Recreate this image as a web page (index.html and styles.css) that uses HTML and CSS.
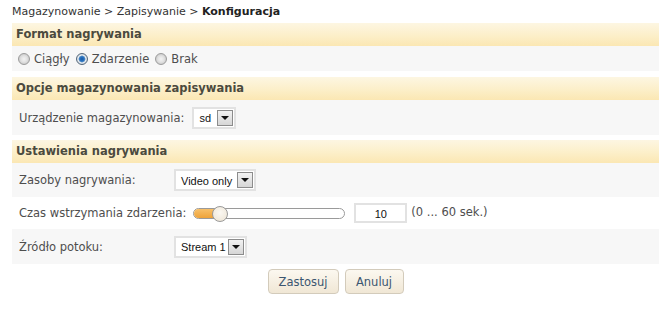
FILE: index.html
```html
<!DOCTYPE html>
<html lang="pl">
<head>
<meta charset="utf-8">
<title>Konfiguracja</title>
<link rel="stylesheet" href="styles.css">
</head>
<body>
<div class="page">
  <div class="crumb">Magazynowanie &gt; Zapisywanie &gt; <b>Konfiguracja</b></div>

  <section class="panel">
    <h2 class="panel-head">Format nagrywania</h2>
    <div class="row row-gray row-radios">
      <label class="radio"><span class="radio-dot"></span>Ciągły</label>
      <label class="radio"><span class="radio-dot checked"></span>Zdarzenie</label>
      <label class="radio"><span class="radio-dot"></span>Brak</label>
    </div>
  </section>

  <section class="panel">
    <h2 class="panel-head">Opcje magazynowania zapisywania</h2>
    <div class="row row-gray row-tall">
      <span class="label">Urządzenie magazynowania:</span>
      <span class="select sel-sd"><span class="sel-text">sd</span><span class="sel-btn"><span class="tri"></span></span></span>
    </div>
  </section>

  <section class="panel">
    <h2 class="panel-head">Ustawienia nagrywania</h2>
    <div class="row row-gray row-r1">
      <span class="label label-col">Zasoby nagrywania:</span>
      <span class="select sel-video"><span class="sel-text">Video only</span><span class="sel-btn"><span class="tri"></span></span></span>
    </div>
    <div class="row row-white row-r2">
      <span class="label">Czas wstrzymania zdarzenia:</span>
      <span class="slider"><span class="slider-fill"></span><span class="slider-thumb"></span></span>
      <span class="num-input">10</span>
      <span class="hint">(0 ... 60 sek.)</span>
    </div>
    <div class="row row-gray row-r3">
      <span class="label label-col">Źródło potoku:</span>
      <span class="select sel-stream"><span class="sel-text">Stream 1</span><span class="sel-btn"><span class="tri"></span></span></span>
    </div>
  </section>

  <div class="actions">
    <button class="btn btn-apply">Zastosuj</button>
    <button class="btn btn-cancel">Anuluj</button>
  </div>
</div>
</body>
</html>
```

FILE: styles.css
```css
* { box-sizing: border-box; }
html, body { margin: 0; padding: 0; background: #ffffff; }
body {
  font-family: "DejaVu Sans", Verdana, sans-serif;
  font-size: 11.5px;
  color: #4a4a4a;
}
.page { padding-left: 12px; width: 100%; overflow: hidden; }

.crumb {
  height: 23px;
  padding-top: 5px;
  line-height: 14px;
  font-size: 11px;
  color: #333333;
}
.crumb b { color: #222222; }

.panel { margin-bottom: 6px; }
.panel:nth-of-type(2) { margin-bottom: 5px; }
.panel:nth-of-type(3) { margin-bottom: 5px; }

.panel-head {
  margin: 0;
  height: 23px;
  line-height: 23px;
  padding-left: 4px;
  font-size: 11.5px;
  font-weight: bold;
  color: #4b4a3e;
  background: linear-gradient(#fdf6e2 0%, #fcefc9 55%, #fbe7b3 100%);
}

.row {
  display: flex;
  align-items: center;
  padding-left: 6px;
  color: #4e4e4e;
  white-space: nowrap;
}
.row-gray { background: #f7f7f7; }
.row-white { background: #ffffff; }

.row-radios { height: 25px; }
.row-tall { height: 35px; padding-left: 7px; }
.row-r1 { height: 34px; padding-left: 7px; }
.row-r2 { height: 32px; padding-left: 7px; }
.row-r3 { height: 35px; padding-left: 7px; }

.label-col { width: 155px; }

/* radios */
.radio { display: inline-flex; align-items: center; margin-right: 6px; }
.radio-dot {
  width: 12px; height: 12px;
  border-radius: 50%;
  border: 1px solid #9b9b9b;
  background: radial-gradient(circle closest-side, #f3f3f3 0, #e2e2e2 3px, #cfcfcf 100%);
  margin-right: 4px;
}
.radio-dot.checked {
  border-color: #55677a;
  background: radial-gradient(circle closest-side, #1a58a3 0, #2b76c4 2.4px, #7fa4c8 3.2px, #e9eef3 3.8px, #cfd8e0 100%);
}

/* selects */
.select {
  display: inline-flex;
  align-items: center;
  justify-content: space-between;
  height: 22px;
  border: 2px solid #e2e2e2;
  background: #ffffff;
  font-family: "Liberation Sans", Arial, sans-serif;
  font-size: 11px;
  color: #111111;
  padding-left: 5px;
  padding-right: 1px;
  white-space: nowrap;
}
.sel-sd { width: 44px; margin-left: 8px; }
.sel-video { width: 82px; }
.sel-stream { width: 73px; }
.sel-text { padding-top: 1px; }
.sel-btn {
  width: 16px; height: 16px;
  border: 1px solid #8c8c8c;
  background: linear-gradient(#f2f2f2, #d6d6d6);
  display: flex; align-items: center; justify-content: center;
}
.tri {
  width: 0; height: 0;
  border-left: 4px solid transparent;
  border-right: 4px solid transparent;
  border-top: 4px solid #111111;
}

/* slider */
.slider {
  position: relative;
  margin-left: 7px;
  width: 152px;
  height: 11px;
  border: 1px solid #9a9a9a;
  border-radius: 6px;
  background: #ffffff;
}
.slider-fill {
  display: block;
  width: 24px;
  height: 100%;
  border-radius: 5px 0 0 5px;
  background: linear-gradient(#f7c06a, #eea33a);
}
.slider-thumb {
  position: absolute;
  left: 18px;
  top: -3px;
  width: 16px;
  height: 16px;
  border-radius: 50%;
  border: 1px solid #9a9a9a;
  background: radial-gradient(circle at 50% 40%, #fbf8f2, #ece3d3);
}

.num-input {
  margin-left: 9px;
  width: 53px;
  height: 20px;
  border: 2px solid #e2e2e2;
  background: #ffffff;
  font-family: "Liberation Sans", Arial, sans-serif;
  font-size: 11px;
  color: #111111;
  display: flex; align-items: center; justify-content: center;
  padding-top: 2px;
}
.hint { margin-left: 4px; margin-top: -3px; }

/* buttons */
.actions {
  display: flex;
  justify-content: center;
  gap: 6px;
}
.btn {
  font-family: "DejaVu Sans", Verdana, sans-serif;
  font-size: 11.5px;
  color: #3b5670;
  height: 25px;
  border: 1px solid #d3cbbb;
  border-radius: 4px;
  background: linear-gradient(#fcf8f0, #f0e7d5);
  padding: 0;
}
.btn-apply { width: 71px; }
.btn-cancel { width: 59px; }
```
